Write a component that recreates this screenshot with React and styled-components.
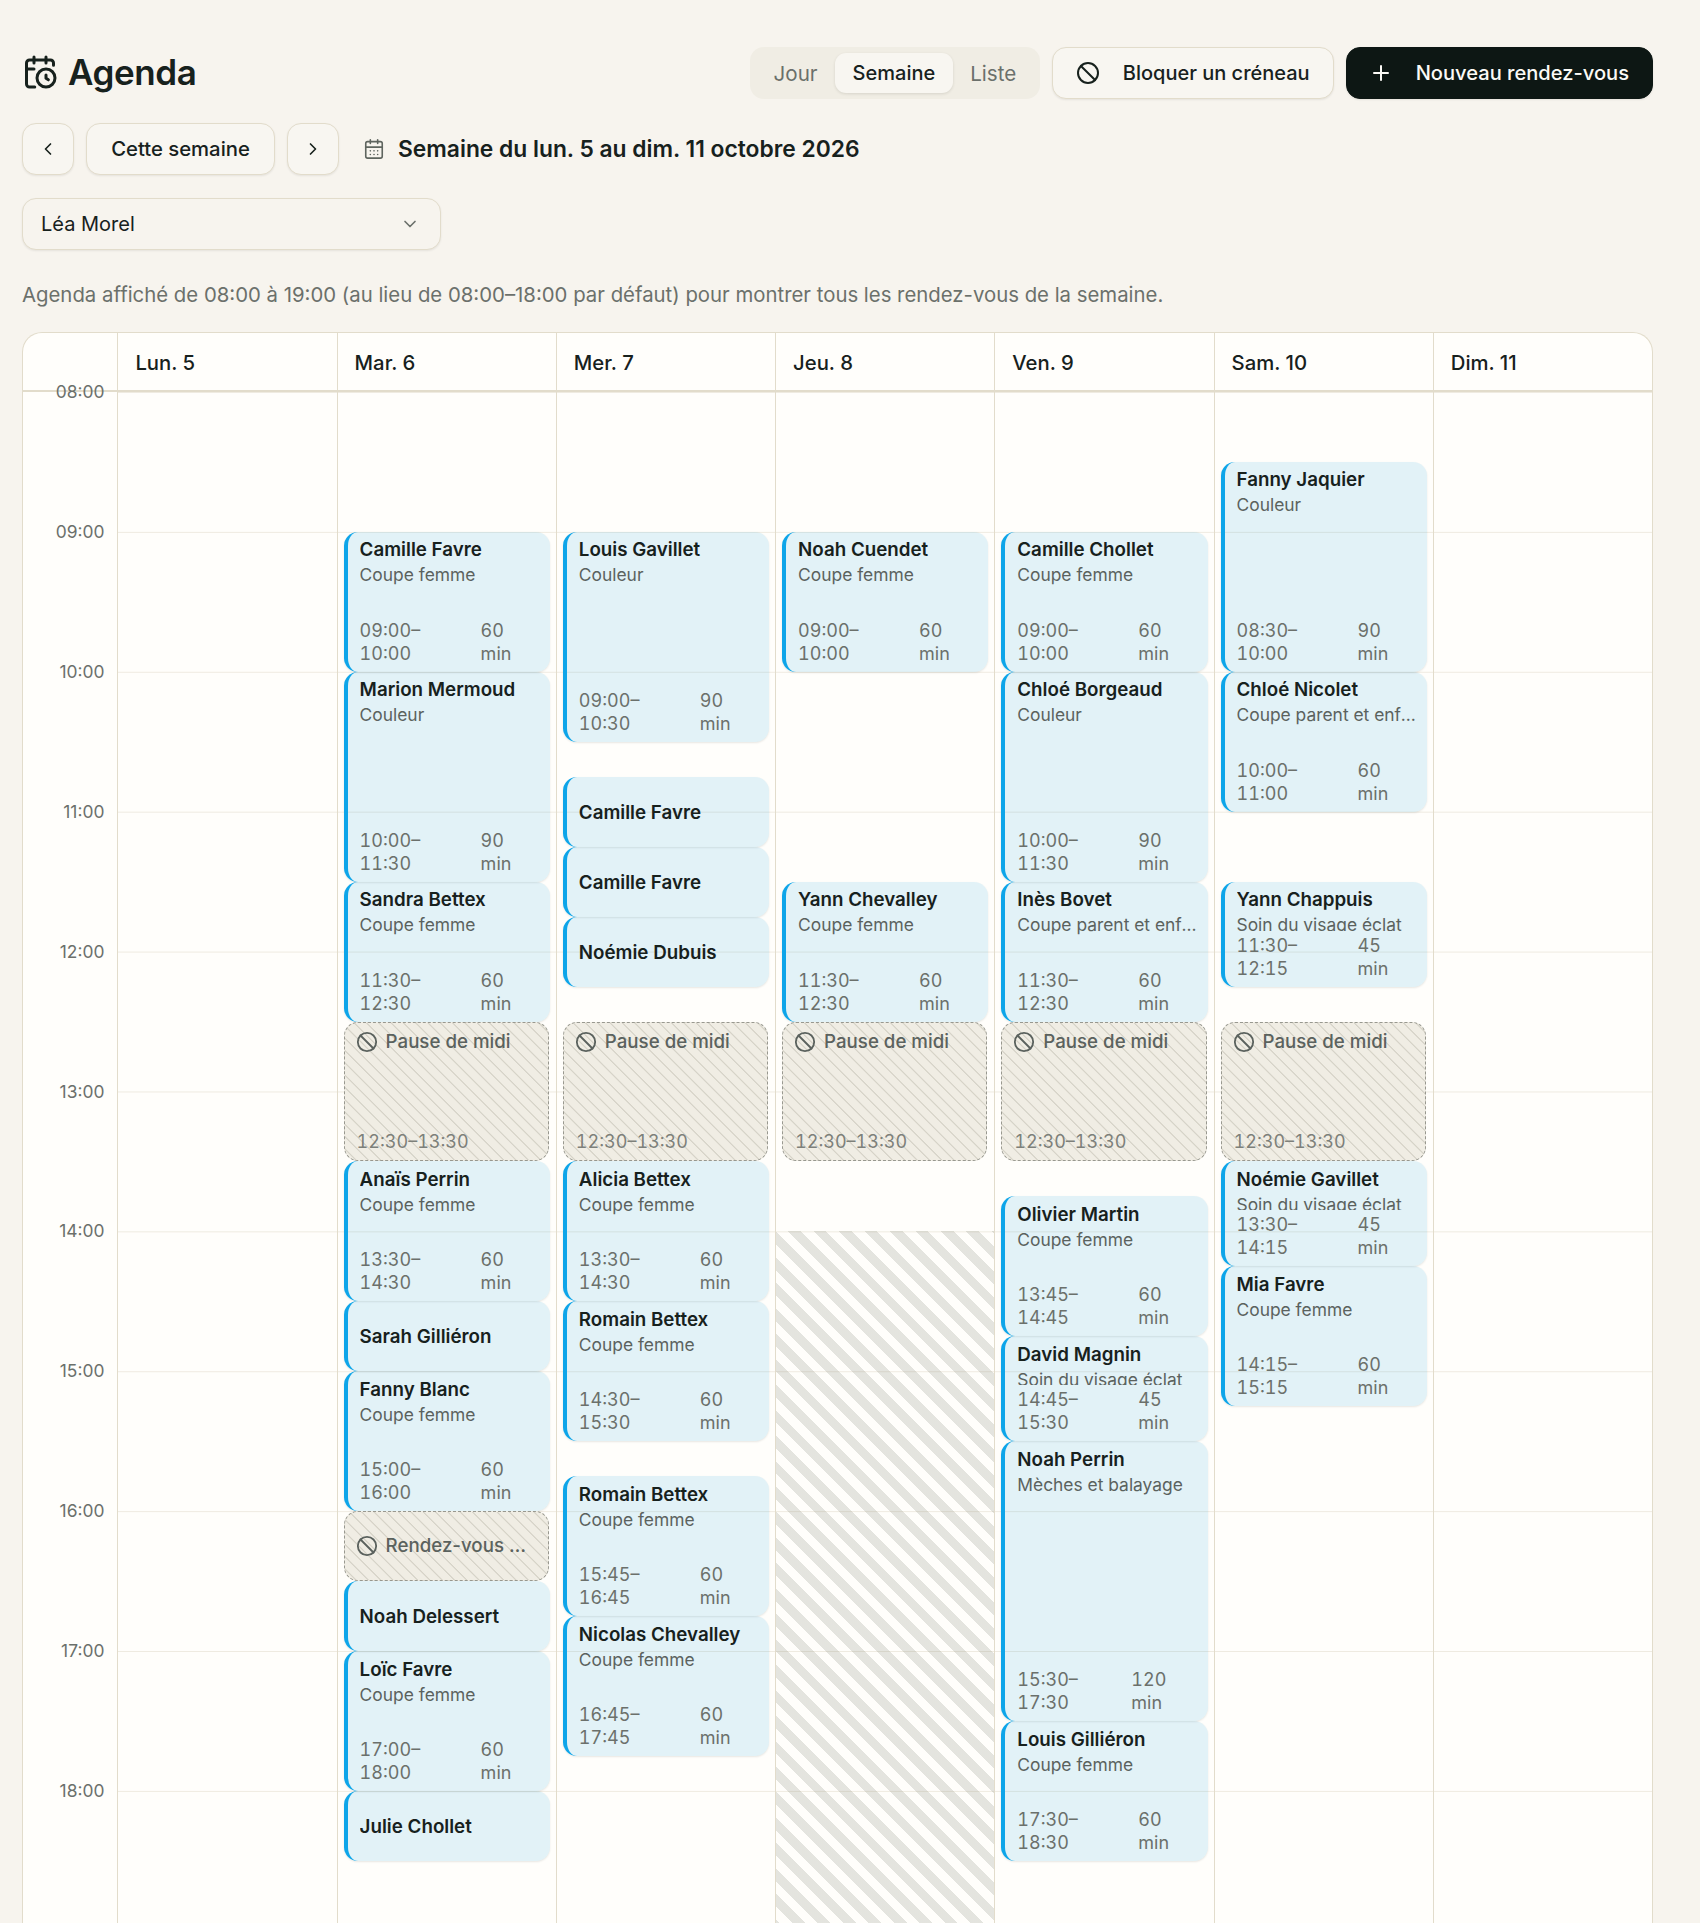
import React from 'react'
import styled, { createGlobalStyle } from 'styled-components'
import {
  Ban,
  CalendarClock,
  CalendarDays,
  ChevronDown,
  ChevronLeft,
  ChevronRight,
  Plus
} from 'lucide-react'

const HOUR_HEIGHT = 139.9
const START_HOUR = 8
const HOURS = ['08:00', '09:00', '10:00', '11:00', '12:00', '13:00', '14:00', '15:00', '16:00', '17:00', '18:00']

const toPx = time => {
  const [h, m] = time.split(':').map(Number)
  return (h - START_HOUR + m / 60) * HOUR_HEIGHT
}

const CF = 'Coupe femme'
const SOIN = 'Soin du visage éclat'
const PARENT = 'Coupe parent et enfant'
const pause = { block: 'Pause de midi', from: '12:30', to: '13:30' }

const DAYS = [
  { label: 'Lun. 5', items: [] },
  {
    label: 'Mar. 6',
    items: [
      { name: 'Camille Favre', service: CF, from: '09:00', to: '10:00' },
      { name: 'Marion Mermoud', service: 'Couleur', from: '10:00', to: '11:30' },
      { name: 'Sandra Bettex', service: CF, from: '11:30', to: '12:30' },
      pause,
      { name: 'Anaïs Perrin', service: CF, from: '13:30', to: '14:30' },
      { name: 'Sarah Gilliéron', service: CF, from: '14:30', to: '15:00' },
      { name: 'Fanny Blanc', service: CF, from: '15:00', to: '16:00' },
      { block: 'Rendez-vous médical', from: '16:00', to: '16:30' },
      { name: 'Noah Delessert', service: CF, from: '16:30', to: '17:00' },
      { name: 'Loïc Favre', service: CF, from: '17:00', to: '18:00' },
      { name: 'Julie Chollet', service: CF, from: '18:00', to: '18:30' }
    ]
  },
  {
    label: 'Mer. 7',
    items: [
      { name: 'Louis Gavillet', service: 'Couleur', from: '09:00', to: '10:30' },
      { name: 'Camille Favre', service: CF, from: '10:45', to: '11:15' },
      { name: 'Camille Favre', service: CF, from: '11:15', to: '11:45' },
      { name: 'Noémie Dubuis', service: CF, from: '11:45', to: '12:15' },
      pause,
      { name: 'Alicia Bettex', service: CF, from: '13:30', to: '14:30' },
      { name: 'Romain Bettex', service: CF, from: '14:30', to: '15:30' },
      { name: 'Romain Bettex', service: CF, from: '15:45', to: '16:45' },
      { name: 'Nicolas Chevalley', service: CF, from: '16:45', to: '17:45' }
    ]
  },
  {
    label: 'Jeu. 8',
    closedFrom: '14:00',
    items: [
      { name: 'Noah Cuendet', service: CF, from: '09:00', to: '10:00' },
      { name: 'Yann Chevalley', service: CF, from: '11:30', to: '12:30' },
      pause
    ]
  },
  {
    label: 'Ven. 9',
    items: [
      { name: 'Camille Chollet', service: CF, from: '09:00', to: '10:00' },
      { name: 'Chloé Borgeaud', service: 'Couleur', from: '10:00', to: '11:30' },
      { name: 'Inès Bovet', service: PARENT, from: '11:30', to: '12:30' },
      pause,
      { name: 'Olivier Martin', service: CF, from: '13:45', to: '14:45' },
      { name: 'David Magnin', service: SOIN, from: '14:45', to: '15:30' },
      { name: 'Noah Perrin', service: 'Mèches et balayage', from: '15:30', to: '17:30' },
      { name: 'Louis Gilliéron', service: CF, from: '17:30', to: '18:30' }
    ]
  },
  {
    label: 'Sam. 10',
    items: [
      { name: 'Fanny Jaquier', service: 'Couleur', from: '08:30', to: '10:00' },
      { name: 'Chloé Nicolet', service: PARENT, from: '10:00', to: '11:00' },
      { name: 'Yann Chappuis', service: SOIN, from: '11:30', to: '12:15' },
      pause,
      { name: 'Noémie Gavillet', service: SOIN, from: '13:30', to: '14:15' },
      { name: 'Mia Favre', service: CF, from: '14:15', to: '15:15' }
    ]
  },
  { label: 'Dim. 11', items: [] }
]

const Appointment = ({ item }) => {
  const top = toPx(item.from)
  const height = toPx(item.to) - top
  const minutes = Math.round((height / HOUR_HEIGHT) * 60)
  if (minutes <= 30) {
    return (
      <EventCard $compact style={{ top, height }}>
        <EventName>{item.name}</EventName>
      </EventCard>
    )
  }
  return (
    <EventCard style={{ top, height }}>
      <EventName>{item.name}</EventName>
      <EventService>{item.service}</EventService>
      <EventMeta>
        <EventTime>{item.from}–{item.to}</EventTime>
        <EventDuration $wide={minutes >= 100}>{minutes} min</EventDuration>
      </EventMeta>
    </EventCard>
  )
}

const BlockedSlot = ({ item }) => {
  const top = toPx(item.from)
  const height = toPx(item.to) - top
  const compact = height <= 70
  return (
    <Blocked $compact={compact} style={{ top, height }}>
      <BlockedTitle>
        <BlockedIcon size={22} strokeWidth={2} />
        <BlockedLabel>{item.block}</BlockedLabel>
      </BlockedTitle>
      {!compact && <BlockedTime>{item.from}–{item.to}</BlockedTime>}
    </Blocked>
  )
}

const App = () => {
  return (
    <Page>
      <GlobalStyle />
      <TopBar>
        <Title>
          <CalendarClock size={36} strokeWidth={2} />
          Agenda
        </Title>
        <Actions>
          <Segment>
            <SegmentItem>Jour</SegmentItem>
            <SegmentItem $active>Semaine</SegmentItem>
            <SegmentItem>Liste</SegmentItem>
          </Segment>
          <Button>
            <Ban size={24} strokeWidth={2} />
            Bloquer un créneau
          </Button>
          <PrimaryButton>
            <Plus size={24} strokeWidth={2} />
            Nouveau rendez-vous
          </PrimaryButton>
        </Actions>
      </TopBar>
      <WeekBar>
        <IconButton><ChevronLeft size={20} strokeWidth={2} /></IconButton>
        <TodayButton>Cette semaine</TodayButton>
        <IconButton><ChevronRight size={20} strokeWidth={2} /></IconButton>
        <WeekLabel>
          <CalendarDays size={22} strokeWidth={1.75} color='#5f655f' />
          Semaine du lun. 5 au dim. 11 octobre 2026
        </WeekLabel>
      </WeekBar>
      <StaffSelect>
        Léa Morel
        <ChevronDown size={20} strokeWidth={2} color='#6b706b' />
      </StaffSelect>
      <Hint>
        Agenda affiché de 08:00 à 19:00 (au lieu de 08:00–18:00 par défaut) pour montrer tous les rendez-vous de la semaine.
      </Hint>
      <Calendar>
        <HeaderRow>
          <Corner />
          {DAYS.map(day => (
            <DayHead key={day.label}>{day.label}</DayHead>
          ))}
        </HeaderRow>
        <Body>
          <TimeColumn>
            {HOURS.map((hour, i) => (
              <HourLabel key={hour} style={{ top: i * HOUR_HEIGHT }}>{hour}</HourLabel>
            ))}
          </TimeColumn>
          {DAYS.map(day => (
            <DayColumn key={day.label}>
              {day.closedFrom && <ClosedZone style={{ top: toPx(day.closedFrom) }} />}
              {day.items.map(item =>
                item.block ? (
                  <BlockedSlot key={item.block} item={item} />
                ) : (
                  <Appointment key={item.name + item.from} item={item} />
                )
              )}
            </DayColumn>
          ))}
        </Body>
      </Calendar>
    </Page>
  )
}

const GlobalStyle = createGlobalStyle`
  html, body {
    margin: 0;
    height: 1923px;
    overflow: hidden;
    background: #f7f4ee;
  }
  body {
    font-family: Inter, "Liberation Sans", sans-serif;
    color: #17211d;
  }
  * {
    box-sizing: border-box;
  }
`
const Page = styled.div`
  padding: 47px 47px 0 22px;
`
const TopBar = styled.div`
  display: flex;
  align-items: center;
  justify-content: space-between;
`
const Title = styled.h1`
  display: flex;
  align-items: center;
  gap: 10px;
  margin: 0;
  padding-bottom: 2px;
  font-size: 35px;
  font-weight: 600;
  letter-spacing: -0.4px;
`
const Actions = styled.div`
  display: flex;
  align-items: center;
  gap: 12px;
`
const Segment = styled.div`
  display: flex;
  align-items: center;
  height: 52px;
  padding: 0 6px;
  border-radius: 14px;
  background: #f0ede4;
`
const SegmentItem = styled.div`
  display: flex;
  align-items: center;
  height: 40px;
  padding: 0 17.5px;
  border-radius: 11px;
  font-size: ${props => (props.$active ? '20px' : '20.6px')};
  font-weight: ${props => (props.$active ? 500 : 400)};
  color: ${props => (props.$active ? '#17211d' : '#6b706b')};
  background: ${props => (props.$active ? '#f8f6f1' : 'transparent')};
  box-shadow: ${props => (props.$active ? '0 1px 3px rgba(30, 30, 20, 0.12)' : 'none')};
`
const Button = styled.button`
  display: flex;
  align-items: center;
  gap: 23px;
  height: 52px;
  padding: 0 23px;
  border: 1px solid #e2dccb;
  border-radius: 14px;
  background: #f8f6f1;
  box-shadow: 0 1px 2px rgba(30, 30, 20, 0.08);
  font-family: inherit;
  font-size: 20px;
  font-weight: 500;
  color: #17211d;
`
const PrimaryButton = styled(Button)`
  gap: 23px;
  padding: 0 23px 0 22px;
  border-color: #0d1714;
  background: #0d1714;
  font-size: 20.1px;
  color: #fbfaf6;
`
const WeekBar = styled.div`
  display: flex;
  align-items: center;
  gap: 12px;
  margin-top: 24px;
`
const IconButton = styled(Button)`
  justify-content: center;
  width: 52px;
  padding: 0;
`
const TodayButton = styled(Button)`
  padding: 0 0 1px;
  justify-content: center;
  width: 189px;
  font-size: 20.3px;
`
const WeekLabel = styled.div`
  display: flex;
  align-items: center;
  gap: 13px;
  margin-left: 12px;
  padding-bottom: 1px;
  font-size: 22.8px;
  font-weight: 600;
`
const StaffSelect = styled.div`
  display: flex;
  align-items: center;
  justify-content: space-between;
  width: 419px;
  height: 52px;
  margin-top: 23px;
  padding: 0 20px 0 18px;
  border: 1px solid #e2dccb;
  border-radius: 14px;
  background: #f7f4ee;
  box-shadow: 0 1px 2px rgba(30, 30, 20, 0.08);
  font-size: 20px;
`
const Hint = styled.p`
  margin: 31px 0 23px;
  font-size: 20.35px;
  line-height: 28px;
  color: #6b706b;
`
const Calendar = styled.div`
  border: 1px solid #e2dccb;
  border-bottom: 0;
  border-radius: 20px 20px 0 0;
  background: #fffefb;
`
const HeaderRow = styled.div`
  display: grid;
  grid-template-columns: 94.4px repeat(7, 1fr);
  height: 59px;
  border-bottom: 2px solid #e2dccb;
`
const Corner = styled.div``
const DayHead = styled.div`
  display: flex;
  align-items: center;
  padding: 2px 0 0 17px;
  border-left: 1px solid #e2dccb;
  font-size: 20.3px;
  font-weight: 500;
`
const Body = styled.div`
  display: grid;
  grid-template-columns: 94.4px repeat(7, 1fr);
  height: 1540px;
`
const TimeColumn = styled.div`
  position: relative;
`
const HourLabel = styled.span`
  position: absolute;
  right: 13px;
  transform: translateY(-50%);
  font-size: 17.4px;
  line-height: 20px;
  color: #6b706b;
`
const DayColumn = styled.div`
  position: relative;
  border-left: 1px solid #e2dccb;
  background-image: linear-gradient(to bottom, #efebe1 0 1px, transparent 1px);
  background-size: 100% 139.9px;
`
const ClosedZone = styled.div`
  position: absolute;
  left: 0;
  right: 0;
  bottom: 0;
  background-image: repeating-linear-gradient(
    45deg,
    rgba(120, 125, 110, 0.2) 0 9px,
    transparent 9px 18px
  );
`
const EventCard = styled.div`
  position: absolute;
  left: 6px;
  right: 6px;
  display: flex;
  flex-direction: column;
  justify-content: ${props => (props.$compact ? 'center' : 'flex-start')};
  padding: ${props => (props.$compact ? '8px 9px 6px 12px' : '6.5px 9px 7px 12px')};
  overflow: hidden;
  border-left: 4px solid #0ea5e9;
  border-radius: 14px;
  background: rgba(14, 158, 225, 0.12);
  box-shadow: 0 1px 2px rgba(30, 30, 20, 0.1);
`
const EventName = styled.div`
  flex: none;
  overflow: hidden;
  font-size: 18.75px;
  font-weight: 600;
  line-height: 24px;
  white-space: nowrap;
  text-overflow: ellipsis;
`
const EventService = styled.div`
  flex: 0 1 auto;
  min-height: 0;
  margin-top: 2px;
  overflow: hidden;
  font-size: 17.4px;
  line-height: 22px;
  white-space: nowrap;
  text-overflow: ellipsis;
  color: #5b625e;
`
const EventMeta = styled.div`
  flex: none;
  display: flex;
  margin-top: auto;
  padding-top: 3px;
  font-size: 18px;
  font-variant-numeric: tabular-nums;
  line-height: 23px;
  color: #6b706b;
`
const EventTime = styled.div`
  flex: none;
  width: 90px;
`
const EventDuration = styled.div`
  width: min-content;
  margin-left: ${props => (props.$wide ? '24px' : '31px')};
`
const Blocked = styled.div`
  position: absolute;
  left: 6px;
  right: 7px;
  display: flex;
  flex-direction: column;
  justify-content: ${props => (props.$compact ? 'center' : 'space-between')};
  padding: ${props => (props.$compact ? '0 14px 0 11px' : '7px 14px 7px 11px')};
  overflow: hidden;
  border: 1px dashed #98988f;
  border-radius: 14px;
  background-color: #f0ede4;
  background-image: repeating-linear-gradient(
    45deg,
    transparent 0 6.8px,
    #d6d3c8 7.5px,
    #d6d3c8 8px,
    transparent 8.7px
  );
  color: #5b625e;
`
const BlockedTitle = styled.div`
  display: flex;
  align-items: center;
  gap: 8px;
  font-size: 18.7px;
  font-weight: 500;
  line-height: 24px;
`
const BlockedIcon = styled(Ban)`
  flex: none;
`
const BlockedLabel = styled.span`
  overflow: hidden;
  white-space: nowrap;
  text-overflow: ellipsis;
`
const BlockedTime = styled.div`
  margin-left: 1px;
  font-size: 18px;
  font-variant-numeric: tabular-nums;
  line-height: 23px;
  color: #7d807a;
`

export default App
